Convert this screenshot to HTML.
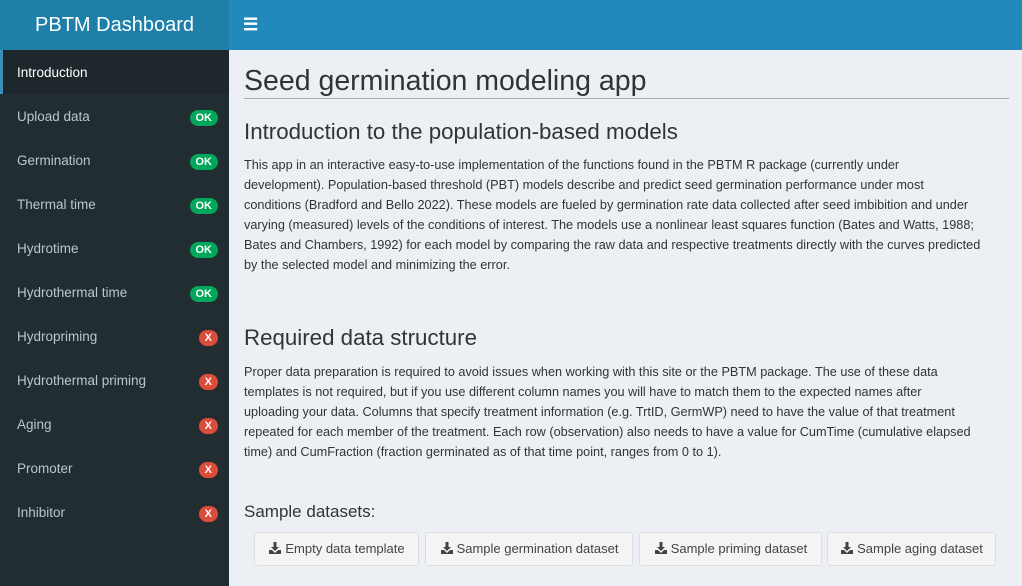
<!DOCTYPE html>
<html><head><meta charset="utf-8"><style>
*{margin:0;padding:0;box-sizing:border-box}
body{width:1022px;height:586px;overflow:hidden;background:#ecf0f5;font-family:"Liberation Sans",sans-serif;position:relative}
.logo{position:absolute;left:0;top:0;width:229px;height:50px;background:#1e7fa8;color:#fff;font-size:20px;text-align:center;line-height:50px}
.nav{position:absolute;left:229px;top:0;right:0;height:50px;background:#2189bb;color:#fff;font-size:17px;font-weight:bold;padding-left:14px;line-height:50px}
.side{position:absolute;left:0;top:50px;width:229px;bottom:0;background:#222d32}
.item{height:44px;line-height:46px;padding-left:17px;color:#b8c7ce;font-size:13.5px;position:relative}
.item.act{background:#1e282c;color:#fff;border-left:3px solid #3c8dbc;padding-left:14px}
.b{position:absolute;right:11px;top:16px;height:16px;line-height:16px;border-radius:8px;color:#fff;font-size:11px;font-weight:bold;padding:0 6px}
.ok{background:#00a65a}.x{background:#dd4b39;padding:0 6px}
.main{position:absolute;left:244px;top:0;width:765px;color:#333}
h1{position:absolute;top:64px;left:0;width:765px;font-weight:normal;font-size:28.5px;color:#333;border-bottom:1px solid #aaa;padding-bottom:2px;height:35px;line-height:34px}
h2{position:absolute;left:0;font-weight:normal;font-size:22.3px;color:#333}
p{position:absolute;left:0;width:770px;font-size:12.7px;line-height:20px;color:#333;white-space:nowrap}
.btn{position:absolute;top:532px;height:34px;border:1px solid #ddd;border-radius:3px;background:#f4f4f4;font-size:13px;color:#444;line-height:32px;text-align:center}
.btn svg{vertical-align:-2px;margin-right:3px}
</style></head><body>
<div class="logo">PBTM Dashboard</div>
<div class="nav">☰</div>
<div class="side">
<div class="item act">Introduction</div>
<div class="item">Upload data<span class="b ok">OK</span></div>
<div class="item">Germination<span class="b ok">OK</span></div>
<div class="item">Thermal time<span class="b ok">OK</span></div>
<div class="item">Hydrotime<span class="b ok">OK</span></div>
<div class="item">Hydrothermal time<span class="b ok">OK</span></div>
<div class="item">Hydropriming<span class="b x">X</span></div>
<div class="item">Hydrothermal priming<span class="b x">X</span></div>
<div class="item">Aging<span class="b x">X</span></div>
<div class="item">Promoter<span class="b x">X</span></div>
<div class="item">Inhibitor<span class="b x">X</span></div>
</div>
<div class="main">
<h1>Seed germination modeling app</h1>
<h2 style="top:119px">Introduction to the population-based models</h2>
<p style="top:155px">This app in an interactive easy-to-use implementation of the functions found in the PBTM R package (currently under<br>development). Population-based threshold (PBT) models describe and predict seed germination performance under most<br>conditions (Bradford and Bello 2022). These models are fueled by germination rate data collected after seed imbibition and under<br>varying (measured) levels of the conditions of interest. The models use a nonlinear least squares function (Bates and Watts, 1988;<br>Bates and Chambers, 1992) for each model by comparing the raw data and respective treatments directly with the curves predicted<br>by the selected model and minimizing the error.</p>
<h2 style="top:325px">Required data structure</h2>
<p style="top:362px">Proper data preparation is required to avoid issues when working with this site or the PBTM package. The use of these data<br>templates is not required, but if you use different column names you will have to match them to the expected names after<br>uploading your data. Columns that specify treatment information (e.g. TrtID, GermWP) need to have the value of that treatment<br>repeated for each member of the treatment. Each row (observation) also needs to have a value for CumTime (cumulative elapsed<br>time) and CumFraction (fraction germinated as of that time point, ranges from 0 to 1).</p>
<div style="position:absolute;top:502px;font-size:17px;color:#333">Sample datasets:</div>
</div>
<svg width="0" height="0" style="position:absolute"><defs><symbol id="d" viewBox="0 0 14 14"><path d="M5.5 1h3v5h2.5L7 10 3 6h2.5z" fill="#444"/><path d="M1 9h3l3 3 3-3h3v4H1z" fill="#444"/></symbol></defs></svg>
<div class="btn" style="left:254px;width:165px"><svg width="14" height="14"><use href="#d"/></svg>Empty data template</div>
<div class="btn" style="left:425px;width:208px"><svg width="14" height="14"><use href="#d"/></svg>Sample germination dataset</div>
<div class="btn" style="left:639px;width:183px"><svg width="14" height="14"><use href="#d"/></svg>Sample priming dataset</div>
<div class="btn" style="left:827px;width:169px"><svg width="14" height="14"><use href="#d"/></svg>Sample aging dataset</div>
</body></html>
